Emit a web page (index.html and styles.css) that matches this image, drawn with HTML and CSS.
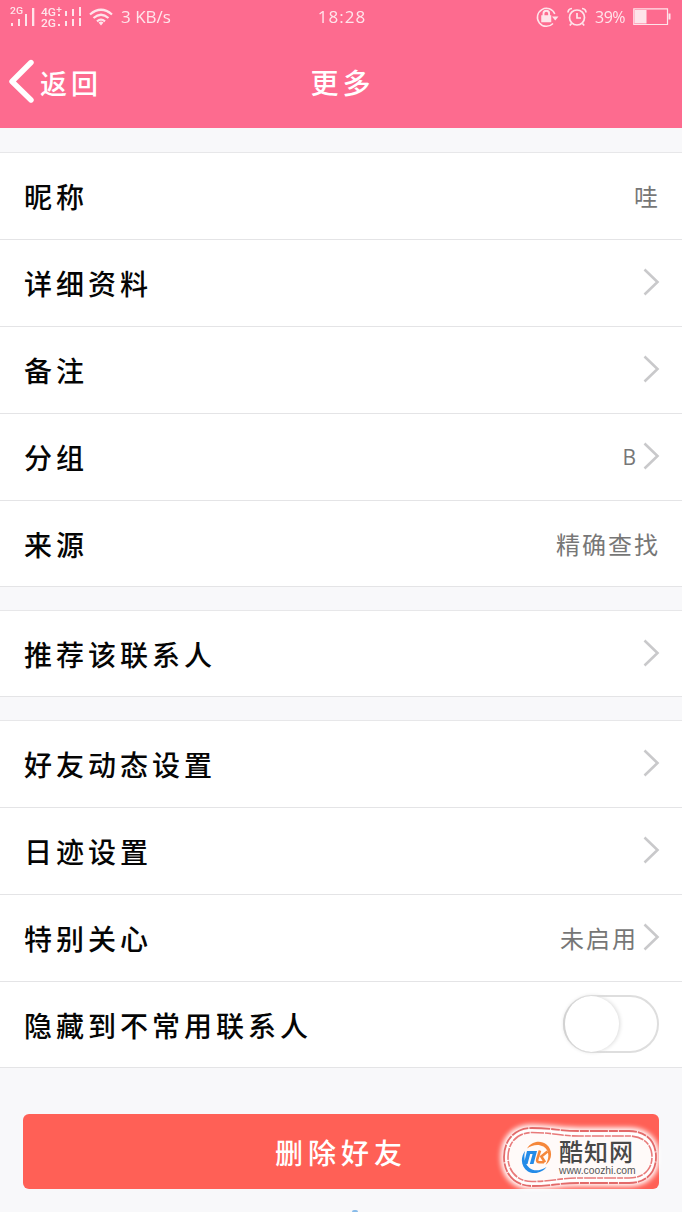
FILE: index.html
```html
<!DOCTYPE html>
<html lang="zh-CN">
<head>
<meta charset="utf-8">
<title>更多</title>
<link rel="stylesheet" href="styles.css">
</head>
<body>
<svg width="0" height="0" class="defs" aria-hidden="true">
  <symbol id="chevron" viewBox="0 0 18 28"><path d="M2.500 1.500 L15.500 14 L2.500 26.500" fill="none" stroke="#c9c9cb" stroke-width="2.600"/></symbol>
</svg>
<div class="screen">
  <header class="header">
    <div class="status">
      <div class="status-left">
        <svg class="signals" width="74" height="22" viewBox="0 0 74 22" fill="#fff">
          <g font-family="Roboto, sans-serif" font-weight="500">
            <text x="0" y="8" font-size="9.500" textLength="13" lengthAdjust="spacingAndGlyphs">2G</text>
            <text x="31" y="9.500" font-size="10" textLength="15" lengthAdjust="spacingAndGlyphs">4G</text>
            <text x="31" y="21" font-size="10" textLength="15" lengthAdjust="spacingAndGlyphs">2G</text>
          </g>
          <path d="M46.500 3.500h5M49 1v5" stroke="#fff" stroke-width="1.200"/>
          <path d="M1 17h2v3h-2zM8 13h2v7h-2zM15 8h2v12h-2zM22 2h2.300v18h-2.300z"/>
          <path d="M48 8h2v2h-2zM55 5h2v5h-2zM62 3h2v7h-2zM69 1h2v9h-2zM48 18h2v2h-2zM55 15h2v5h-2zM62 13h2v7h-2zM69 12h2v8h-2z"/>
        </svg>
        <svg class="wifi" width="24" height="18" viewBox="0 0 24 18" fill="none" stroke="#fff" stroke-width="2.200">
          <path d="M1 6.500Q12 -3 23 6.500M4.500 10Q12 3.500 19.500 10M8 13.300Q12 9.800 16 13.300"/>
          <path d="M9.500 14.600Q12 12.500 14.500 14.600L12 17.500z" fill="#fff" stroke="none"/>
        </svg>
        <span class="speed">3 KB/s</span>
      </div>
      <span class="time">18:28</span>
      <div class="status-right">
        <svg width="23" height="22" viewBox="0 0 23 22" fill="none" stroke="#fff" stroke-width="1.500">
          <path d="M18.800 8A9 9 0 1 0 17 17.500"/>
          <path d="M16 10.500h6.500L19.200 14.500z" fill="#fff" stroke="none"/>
          <path d="M6 10h8.500v5.500H6z" fill="#fff"/><path d="M7.500 10V7.500a2.800 2.800 0 0 1 5.600 0V10" stroke-width="1.900"/>
        </svg>
        <svg class="alarm" width="20" height="20" viewBox="0 0 20 20" fill="none" stroke="#fff" stroke-width="1.700">
          <circle cx="10" cy="10.500" r="7.500"/><path d="M10 6v5h4M1 5.500Q1 2 5 1.500M19 5.500Q19 2 15 1.500M4.500 16.500L2.800 18.500M15.500 16.500L17.200 18.500"/>
        </svg>
        <span class="percent">39%</span>
        <svg class="battery" width="38" height="18" viewBox="0 0 38 18"><path d="M.8.800H34.500V16.500H.8z" fill="none" stroke="#fff" stroke-width="1.200"/><path d="M1.500 2h12v13.500h-12zM35.500 5.500h2v6h-2z" fill="#fff"/></svg>
      </div>
    </div>
    <nav class="nav">
      <a class="back">
        <svg width="26" height="44" viewBox="0 0 26 44"><path d="M22 3.500L3 22.500L22 41" fill="none" stroke="#fff" stroke-width="5.400" stroke-linecap="round" stroke-linejoin="round"/></svg>
        <span class="back-text">返回</span>
      </a>
      <h1 class="title">更多</h1>
    </nav>
  </header>
  <main class="content">
    <section class="group">
      <div class="row"><span class="label">昵称</span><span class="value">哇</span></div>
      <div class="row"><span class="label">详细资料</span><svg class="chevron"><use href="#chevron"/></svg></div>
      <div class="row"><span class="label">备注</span><svg class="chevron"><use href="#chevron"/></svg></div>
      <div class="row"><span class="label">分组</span><span class="value letter">B</span><svg class="chevron"><use href="#chevron"/></svg></div>
      <div class="row"><span class="label">来源</span><span class="value">精确查找</span></div>
    </section>
    <section class="group">
      <div class="row"><span class="label">推荐该联系人</span><svg class="chevron"><use href="#chevron"/></svg></div>
    </section>
    <section class="group">
      <div class="row"><span class="label">好友动态设置</span><svg class="chevron"><use href="#chevron"/></svg></div>
      <div class="row"><span class="label">日迹设置</span><svg class="chevron"><use href="#chevron"/></svg></div>
      <div class="row"><span class="label">特别关心</span><span class="value">未启用</span><svg class="chevron"><use href="#chevron"/></svg></div>
      <div class="row"><span class="label">隐藏到不常用联系人</span><span class="switch"><span class="knob"></span></span></div>
    </section>
    <div class="action">
      <button class="delete">删除好友</button>
      <div class="badge">
        <svg class="frame" width="166" height="72" viewBox="0 0 166 72" fill="none">
          <path d="M35 8C56 8 62 11 82 11H132C149 11 158 21 158 36S149 61 132 61H82C62 61 56 64 35 64C18 64 8 53 8 36S18 8 35 8Z" fill="#fff" stroke="#fff" stroke-width="9" class="halo"/>
          <path d="M35 7C56 7 62 10 82 10H132C149 10 159 20 159 36S149 62 132 62H82C62 62 56 65 35 65C18 65 7 53 7 36S18 7 35 7Z" stroke="#e36a6a" stroke-width="1.800" stroke-dasharray="18 1 9 1"/>
          <path d="M35 11.500C56 11.500 62 15 82 15H132C147 15 155 24 155 36S147 57 132 57H82C62 57 56 60.500 35 60.500C20 60.500 11 50 11 36S20 11.500 35 11.500Z" fill="#fffaf9" stroke="#e87a7a" stroke-width="1.600" stroke-dasharray="12 1 6 1"/>
        </svg>
        <div class="brand">
          <svg width="32" height="34" viewBox="0 0 32 34" fill="none">
            <path d="M6 8.500C10 2 19 -.5 25.500 4.500C32 10 31.500 20 24.500 25C29 17 28 10 22.500 6.500C17 3.500 11 5 6 8.500Z" fill="#f5873b"/>
            <path d="M4 11C-1 18 0 27 7 31.500C14 35 22 32 25.500 27C19 31 13 31.500 8.500 28C3.500 24 2.500 18 4 11Z" fill="#248be8"/>
            <path d="M6 11H16L12.500 24H8.800L11.600 14H9.200L6.500 24H2.800z" fill="#248be8"/>
            <path d="M19 10.500L16.300 19Q15.500 22.300 18.500 22.300H23M26.500 11.500L20.300 16.500L24 22.300" stroke="#f5873b" stroke-width="2.600"/>
          </svg>
          <div class="brand-text"><span class="brand-name">酷知网</span><span class="brand-url">www.coozhi.com</span></div>
        </div>
      </div>
    </div>
    <div class="dot"></div>
  </main>
</div>
</body>
</html>
```
FILE: styles.css
```css
* { box-sizing: border-box; }
body { margin: 0; background: #f8f8fa; font-family: "Noto Sans CJK SC", sans-serif; }
.defs { display: block; }
.screen { width: 682px; height: 1212px; overflow: hidden; background: #f8f8fa; }
.header { height: 128px; background: #fd6b8f; color: #fff; }
.status { height: 36px; display: grid; grid-template-columns: 1fr auto 1fr; align-items: center; padding: 0 11px 2px 10px; font-family: "Open Sans", sans-serif; font-size: 17px; line-height: 22px; opacity: .82; }
.status-left, .status-right { display: flex; align-items: center; }
.status-right { justify-content: flex-end; }
.signals { margin-right: 5px; }
.speed { margin-left: 8px; letter-spacing: 0; }
.time { letter-spacing: 1px; padding-left: 3px; }
.alarm { margin-left: 8px; }
.percent { margin: 0 8px; font-size: 16px; width: 30px; letter-spacing: -.5px; }
.nav { height: 92px; display: grid; grid-template-columns: 1fr auto 1fr; align-items: center; padding: 0 9px 2px; }
.back { display: flex; align-items: center; gap: 5px; font-size: 27px; font-weight: 500; letter-spacing: 4px; line-height: 40px; }
.back-text { padding-top: 3px; }
.title { margin: 0; padding: 2px 0 0 3px; font-size: 28px; font-weight: 500; letter-spacing: 4px; line-height: 40px; }
.content { padding-top: 25px; }
.group { margin-bottom: 23px; background: #fff; box-shadow: 0 -1px #e7e7e9; }
.row { height: 87px; display: flex; align-items: center; padding: 0 22px 0 24px; border-bottom: 1px solid #e4e4e6; }
.group .row:last-child { height: 86px; }
.group + .group { margin-top: 24px; }
.label { flex: 1; color: #050505; font-size: 28px; font-weight: 500; letter-spacing: 4px; line-height: 40px; }
.value { color: #777; font-size: 24px; letter-spacing: 2px; margin-right: 0; line-height: 32px; }
.letter { font-family: "Open Sans", sans-serif; font-size: 21px; letter-spacing: 0; margin-right: 2px; }
.chevron { width: 18px; height: 28px; margin: 0 0 2px 4px; flex: none; }
.switch { width: 96px; height: 58px; margin: 0 1px 2px 0; border: 2px solid #dedede; border-radius: 29px; background: #fff; display: flex; align-items: center; }
.knob { width: 56px; height: 56px; margin-left: -2px; border-radius: 50%; border-left: 2px solid #d2d2d2; box-shadow: 1px 0 4px #d9d9d9; background: #fff; }
.action { position: relative; margin: 46px 23px 0; }
.delete { display: block; width: 636px; height: 75px; border: 0; border-radius: 6px; background: #ff6056; color: #fff; font: 500 28px "Noto Sans CJK SC", sans-serif; letter-spacing: 5px; padding: 0; }
.badge { position: absolute; left: 474px; top: 7px; width: 166px; height: 72px; }
.frame { display: block; overflow: visible; }
.halo { filter: blur(2.5px); }
.brand { position: absolute; left: 24px; top: 19px; display: flex; gap: 6px; }
.brand-text { display: flex; flex-direction: column; }
.brand-name { color: #484848; font-size: 24px; letter-spacing: 1px; font-weight: 500; line-height: 22px; height: 25px; }
.brand-url { color: #555; font: 10.3px "Liberation Sans", sans-serif; line-height: 11px; }
.dot { width: 6px; height: 2px; margin: 21px auto 0 352px; border-radius: 3px 3px 0 0; background: #89bce9; }
```
